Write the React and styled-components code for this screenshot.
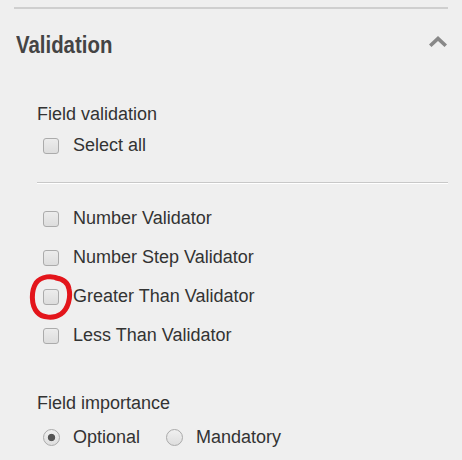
import React from 'react'
import styled, { createGlobalStyle } from 'styled-components'

const GlobalStyle = createGlobalStyle`
  body {
    margin: 0;
    background: #efefef;
    font-family: "Liberation Sans", Arial, sans-serif;
  }
`;

const Panel = styled.div`
  width: 462px;
  height: 460px;
  padding: 7px 14px 0;
  box-sizing: border-box;
  overflow: hidden;
`;

const TopRule = styled.div`
  height: 2px;
  background: #cfcfcf;
`;

const Header = styled.div`
  display: flex;
  justify-content: space-between;
  align-items: flex-start;
  padding: 23px 1px 0 2px;
  height: 71px;
  box-sizing: border-box;
`;

/* narrow bold face: Arial Narrow isn't available, so squeeze the regular one */
const Title = styled.h2`
  margin: 0;
  font-family: "Liberation Sans", Arial, sans-serif;
  font-weight: bold;
  font-size: 24px;
  line-height: 26px;
  color: #444;
  transform: scaleX(0.85);
  transform-origin: left center;
`;

const Chevron = styled.svg`
  margin-top: 4px;
`;

const Section = styled.div`
  padding: 23px 0 0 23px;
`;

const GroupLabel = styled.div`
  font-size: 18px;
  line-height: 22px;
  color: #333;
  margin: ${p => p.$top || 0}px 0 1px;
`;

const Row = styled.label`
  position: relative;
  display: flex;
  align-items: center;
  height: 39px;
  padding-left: 6px;
  font-size: 18px;
  color: #333;
`;

const Box = styled.input.attrs({ type: 'checkbox' })`
  appearance: none;
  margin: 0 14px 0 0;
  width: 16px;
  height: 16px;
  border: 1px solid #ababab;
  border-radius: 3px;
  background: linear-gradient(#ececec, #dddddd);
  box-sizing: border-box;
`;

const Divider = styled.hr`
  margin: 17px 0 15px;
  border: 0;
  border-top: 1px solid #c8c8c8;
  border-bottom: 1px solid #ffffff;
`;

const RadioRow = styled.div`
  display: flex;
  align-items: center;
  height: 39px;
  margin-top: 4px;
  padding-left: 6px;
`;

const RadioLabel = styled.label`
  display: flex;
  align-items: center;
  font-size: 18px;
  color: #333;
  margin-right: 26px;
`;

const Radio = styled.input.attrs({ type: 'radio' })`
  appearance: none;
  margin: 0 13px 0 0;
  width: 17px;
  height: 17px;
  border: 1px solid #aaaaaa;
  border-radius: 50%;
  background: linear-gradient(#f0f0f0, #dedede);
  box-sizing: border-box;

  &:checked {
    background: radial-gradient(circle, #555 0 3.3px, transparent 4.1px),
      linear-gradient(#f0f0f0, #dedede);
  }
`;

const Mark = styled.svg`
  position: absolute;
  left: -8px;
  top: -3px;
  pointer-events: none;
`;

const validators = [
  'Number Validator',
  'Number Step Validator',
  'Greater Than Validator',
  'Less Than Validator',
];

export default function App() {
  return (
    <Panel>
      <GlobalStyle />
      <TopRule />
      <Header>
        <Title>Validation</Title>
        <Chevron width="18" height="11" viewBox="0 0 18 11">
          <path d="M9 0 L18 8.5 L15.5 11 L9 5 L2.5 11 L0 8.5 Z" fill="#888" />
        </Chevron>
      </Header>
      <Section>
        <GroupLabel>Field validation</GroupLabel>
        <Row>
          <Box />
          Select all
        </Row>
        <Divider />
        {validators.map(v => (
          <Row key={v}>
            <Box />
            {v}
            {v === 'Greater Than Validator' && (
              <Mark width="46" height="47" viewBox="0 0 46 47">
                <path
                  d="M31 5 C23 1 12 2 7 9 C2 17 2 31 8 38 C13 44 25 45 32 40 C39 35 42 24 40 15 C39 9 34 5 27 4"
                  fill="none"
                  stroke="#e3151b"
                  strokeWidth="5"
                  strokeLinecap="round"
                />
              </Mark>
            )}
          </Row>
        ))}
        <GroupLabel $top={37}>Field importance</GroupLabel>
        <RadioRow>
          <RadioLabel>
            <Radio name="imp" defaultChecked />
            Optional
          </RadioLabel>
          <RadioLabel>
            <Radio name="imp" />
            Mandatory
          </RadioLabel>
        </RadioRow>
      </Section>
    </Panel>
  )
}
